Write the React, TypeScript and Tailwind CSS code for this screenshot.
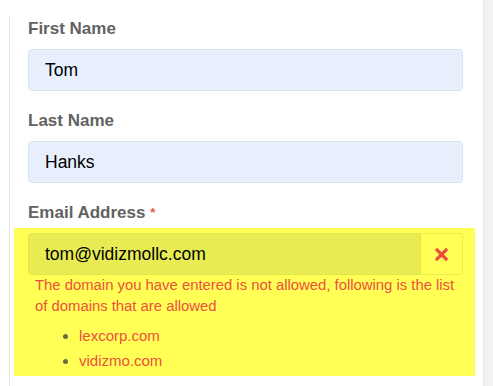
function Field({ label, value }: { label: string; value: string }) {
  return (
    <div className="mb-[18px]">
      <label className="mb-[8px] block text-[17px] font-bold leading-[24px] text-[#626262]">
        {label}
      </label>
      <div className="flex h-[42px] items-center rounded-[4px] border border-[#dde3ec] bg-[#e8f0fe] px-[16px] text-[17.5px] text-black">
        {value}
      </div>
    </div>
  )
}

export default function App() {
  return (
    <div
      className="flex min-h-screen bg-white"
      style={{ fontFamily: '"Liberation Sans", Arial, sans-serif' }}
    >
      <div className="flex-1 pt-[16px] pl-[9px]">
        <div className="h-[370px] border-l border-[#e6e6e6] pt-[1px] pl-[18px] pr-[20px]">
          <Field label="First Name" value="Tom" />
          <Field label="Last Name" value="Hanks" />

          <div>
            <label className="mb-[3px] block text-[17px] font-bold leading-[24px] text-[#626262]">
              Email Address <span className="align-top text-[13px] text-[#ee5a4a]">*</span>
            </label>
            <div className="-ml-[14px] -mr-[12px] bg-[#ffff55] pl-[14px] pr-[12px] pt-[5px] pb-[3px]">
              <div className="flex h-[42px]">
                <div className="flex flex-1 items-center rounded-l-[4px] border border-[#e2e64c] bg-[#e8ec52] px-[16px] text-[17.5px] text-black">
                  tom@vidizmollc.com
                </div>
                <div className="flex w-[42px] items-center justify-center rounded-r-[4px] border border-l-0 border-[#eded4c]">
                  <svg width="13" height="13" viewBox="0 0 13 13" className="text-[#ec5040]">
                    <path d="M2 2 L11 11 M11 2 L2 11" stroke="currentColor" strokeWidth="3.2" strokeLinecap="square" />
                  </svg>
                </div>
              </div>
              <p className="pl-[7px] text-[14.85px] leading-[21px] text-[#ee5040]">
                The domain you have entered is not allowed, following is the list of domains that are allowed
              </p>
              <ul className="mt-[6px] list-disc pl-[51px] text-[15px] leading-[25px] text-[#6b6b3c]">
                <li>
                  <span className="text-[#ee5040]">lexcorp.com</span>
                </li>
                <li>
                  <span className="text-[#ee5040]">vidizmo.com</span>
                </li>
              </ul>
            </div>
          </div>
        </div>
      </div>
      <div className="w-[10px] border-l border-[#e6e6e6] bg-[#f2f2f2]" />
    </div>
  )
}
